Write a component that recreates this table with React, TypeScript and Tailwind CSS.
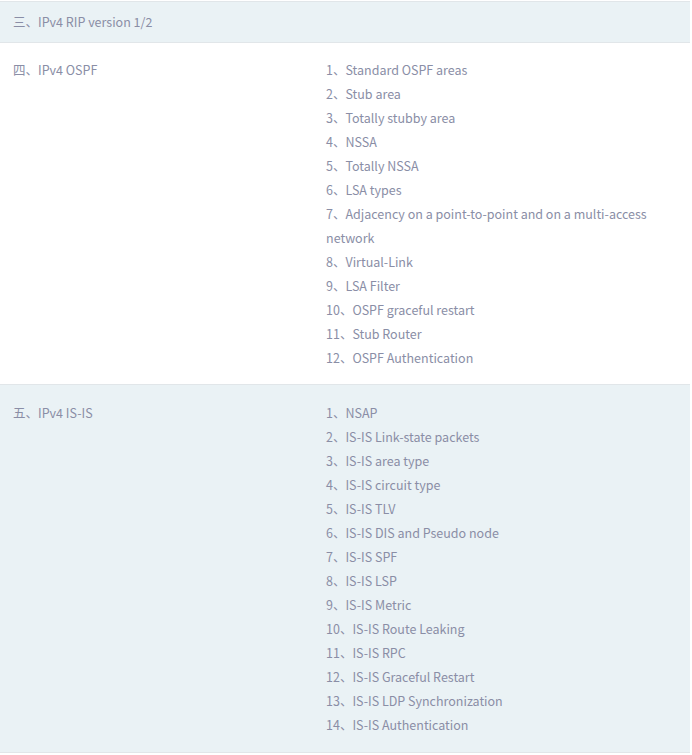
import React from "react";

const ospf = [
  "1、Standard OSPF areas",
  "2、Stub area",
  "3、Totally stubby area",
  "4、NSSA",
  "5、Totally NSSA",
  "6、LSA types",
  "7、Adjacency on a point-to-point and on a multi-access network",
  "8、Virtual-Link",
  "9、LSA Filter",
  "10、OSPF graceful restart",
  "11、Stub Router",
  "12、OSPF Authentication",
];

const isis = [
  "1、NSAP",
  "2、IS-IS Link-state packets",
  "3、IS-IS area type",
  "4、IS-IS circuit type",
  "5、IS-IS TLV",
  "6、IS-IS DIS and Pseudo node",
  "7、IS-IS SPF",
  "8、IS-IS LSP",
  "9、IS-IS Metric",
  "10、IS-IS Route Leaking",
  "11、IS-IS RPC",
  "12、IS-IS Graceful Restart",
  "13、IS-IS LDP Synchronization",
  "14、IS-IS Authentication",
];

export default function App() {
  return (
    <div
      className="w-[692px] min-h-[755px] bg-white pt-px text-[12.5px] leading-6 text-[#8a8ea6]"
      style={{ fontFamily: '"Noto Sans CJK SC", "Noto Sans", sans-serif' }}
    >
      <div className="w-[690px] border-t border-[#e1e6e9]">
        <div className="flex h-[41px] items-center bg-[#eaf2f5] px-[13px] border-b border-[#e1e6e9]">
          三、IPv4 RIP version 1/2
        </div>
        <div className="grid grid-cols-[313px_1fr] bg-white pt-[15px] pb-[14px] border-b border-[#e1e6e9]">
          <div className="px-[13px]">四、IPv4 OSPF</div>
          <div className="pl-[13px] pr-[20px]">
            {ospf.map((t) => (
              <div key={t}>{t}</div>
            ))}
          </div>
        </div>
        <div className="grid grid-cols-[313px_1fr] bg-[#eaf2f5] pt-4 pb-[15px] border-b border-[#e1e6e9]">
          <div className="px-[13px]">五、IPv4 IS-IS</div>
          <div className="pl-[13px] pr-[20px]">
            {isis.map((t) => (
              <div key={t}>{t}</div>
            ))}
          </div>
        </div>
      </div>
    </div>
  );
}
